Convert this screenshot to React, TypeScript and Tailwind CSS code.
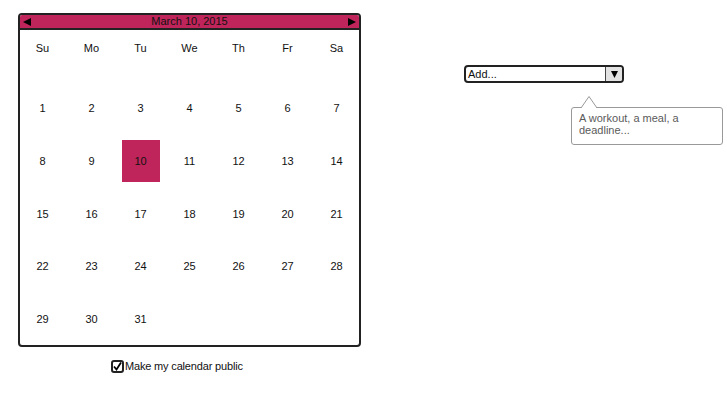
import React from "react";

const days = ["Su", "Mo", "Tu", "We", "Th", "Fr", "Sa"];
const weeks: (number | null)[][] = [
  [1, 2, 3, 4, 5, 6, 7],
  [8, 9, 10, 11, 12, 13, 14],
  [15, 16, 17, 18, 19, 20, 21],
  [22, 23, 24, 25, 26, 27, 28],
  [29, 30, 31, null, null, null, null],
];

export default function App() {
  return (
    <div
      className="w-[727px] h-[410px] bg-white flex text-[#111]"
      style={{ fontFamily: '"Liberation Sans", Arial, sans-serif' }}
    >
      <div className="flex flex-col pl-[18px] pt-[13px]">
        <div className="w-[343px] h-[334px] border-2 border-[#222] rounded-[4px] flex flex-col overflow-hidden">
          <div className="h-[15px] shrink-0 bg-[#bf255a] border-b-2 border-[#222] flex items-center justify-between px-[3px] text-[11px] leading-none">
            <svg width="8" height="8" viewBox="0 0 8 8">
              <polygon points="8,0 8,8 0,4" fill="#000" />
            </svg>
            <span>March 10, 2015</span>
            <svg width="8" height="8" viewBox="0 0 8 8">
              <polygon points="0,0 0,8 8,4" fill="#000" />
            </svg>
          </div>
          <div className="grid grid-cols-7 h-[36px] shrink-0 items-center text-[11px] -mx-[2px]">
            {days.map((d) => (
              <div key={d} className="text-center">
                {d}
              </div>
            ))}
          </div>
          <div className="h-[16px] shrink-0" />
          <div className="flex flex-col -mx-[2px] shrink-0">
            {weeks.map((w, i) => (
              <div key={i} className="grid grid-cols-7 h-[52.75px] shrink-0">
                {w.map((n, j) => (
                  <div key={j} className="flex items-center justify-center text-[11px]">
                    {n === 10 ? (
                      <div className="w-[38px] h-[42px] bg-[#bf255a] flex items-center justify-center">
                        10
                      </div>
                    ) : (
                      n ?? ""
                    )}
                  </div>
                ))}
              </div>
            ))}
          </div>
        </div>
        <div className="flex items-center pl-[93px] mt-[11px] text-[11px] tracking-[-0.17px]">
          <div className="w-[13px] h-[13px] border-2 border-[#222] rounded-[3px] flex items-center justify-center mr-[1px]">
            <svg width="9" height="9" viewBox="0 0 9 9">
              <polyline points="1,4.5 3.5,7.5 8,0.5" fill="none" stroke="#000" strokeWidth="1.8" />
            </svg>
          </div>
          <span>Make my calendar public</span>
        </div>
      </div>
      <div className="flex flex-col ml-[103px] pt-[65px]">
        <div className="w-[160px] h-[18px] border-2 border-[#222] rounded-[4px] flex overflow-hidden">
          <div className="flex-1 flex items-center pl-[2px] text-[11px] leading-none">Add...</div>
          <div className="w-[17px] bg-[#e2e2e2] border-l border-[#444] flex items-center justify-center">
            <svg width="7" height="7" viewBox="0 0 7 7">
              <polygon points="0,0 7,0 3.5,7" fill="#000" />
            </svg>
          </div>
        </div>
        <div className="relative ml-[107px] mt-[24px] w-[152px] h-[38px] border border-[#999] rounded-[3px] bg-white px-[7px] pt-[4px] text-[11px] leading-[12px] text-[#5a5a5a]">
          <svg className="absolute -top-[12px] left-[9px]" width="16" height="13" viewBox="0 0 16 13">
            <polyline points="0,12 8,0.5 16,12" fill="#fff" stroke="#999" strokeWidth="1" />
            <rect x="1" y="12" width="14" height="1.5" fill="#fff" />
          </svg>
          A workout, a meal, a deadline...
        </div>
      </div>
    </div>
  );
}
